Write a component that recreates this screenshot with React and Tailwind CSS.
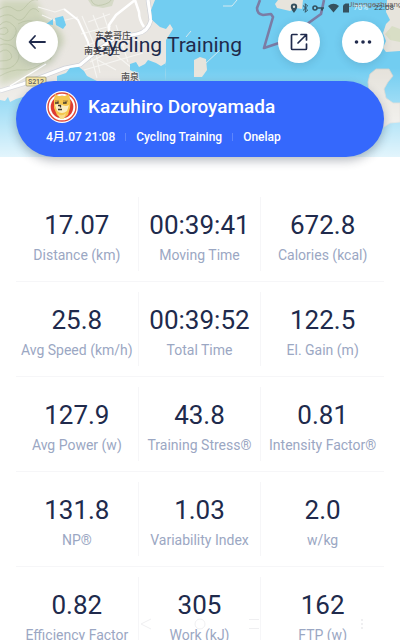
const stats = [
  [
    { value: '17.07', label: 'Distance (km)' },
    { value: '00:39:41', label: 'Moving Time' },
    { value: '672.8', label: 'Calories (kcal)' },
  ],
  [
    { value: '25.8', label: 'Avg Speed (km/h)' },
    { value: '00:39:52', label: 'Total Time' },
    { value: '122.5', label: 'El. Gain (m)' },
  ],
  [
    { value: '127.9', label: 'Avg Power (w)' },
    { value: '43.8', label: 'Training Stress®' },
    { value: '0.81', label: 'Intensity Factor®' },
  ],
  [
    { value: '131.8', label: 'NP®' },
    { value: '1.03', label: 'Variability Index' },
    { value: '2.0', label: 'w/kg' },
  ],
  [
    { value: '0.82', label: 'Efficiency Factor' },
    { value: '305', label: 'Work (kJ)' },
    { value: '162', label: 'FTP (w)' },
  ],
];

function MapBackdrop() {
  return (
    <svg
      viewBox="0 0 400 157"
      preserveAspectRatio="xMidYMin slice"
      className="absolute inset-0 h-full w-full"
      aria-hidden="true"
    >
      <defs>
        <linearGradient id="fade" x1="0" y1="0" x2="0" y2="1">
          <stop offset="0" stopColor="#fff" stopOpacity="0" />
          <stop offset="1" stopColor="#fff" stopOpacity="0.8" />
        </linearGradient>
        <filter id="soft" x="-20%" y="-20%" width="140%" height="140%">
          <feGaussianBlur stdDeviation="3" />
        </filter>
        <clipPath id="land">
          <path d="M0 0H155L151 10L152 20L160 27L166 29L170 24L173 29L166 40V61L165 66L166 81H70L40 92L16 99L10 102L8 97L5 101L0 100Z" />
        </clipPath>
      </defs>
      <rect width="400" height="157" fill="#72cdf1" />

      <g clipPath="url(#land)">
        <rect width="180" height="110" fill="#e9e6e1" />
        <path
          d="M0 0H36L41 10L46 18L52 24L62 33L64 42L57 52L52 62L40 67L30 72L22 78L10 82L0 86Z"
          fill="#cfd5bb"
          filter="url(#soft)"
        />
        <path d="M88 0H114L112 6L103 8L92 6Z" fill="#d6dac8" />
        <g fill="none" stroke="#b3be9c" strokeWidth="0.8" opacity="0.7">
          <path d="M0 9Q8 4 14 9T26 6T38 0" />
          <path d="M0 17Q9 12 15 18T27 14T39 12" />
          <path d="M0 25Q6 18 13 25Q19 30 14 37T0 38" />
          <path d="M0 29Q8 25 8 32Q5 36 0 34" />
          <path d="M0 45Q8 42 15 48T17 62T0 69" />
          <path d="M0 52Q7 47 11 54T0 61" />
          <path d="M18 24Q28 18 38 23T53 31" />
          <path d="M20 30Q27 25 33 29" />
          <path d="M0 76Q12 69 22 70T44 62" />
          <path d="M54 32Q60 38 56 47T50 60" />
          <path d="M91 0Q94 7 102 5T111 0" />
        </g>
        <g fill="none" stroke="#f6f5f2" strokeWidth="1.1">
          <path d="M38 7L55 12L64 9M42 15L58 22L78 17M88 22L110 14M81 34L111 26M85 46L110 37M90 62L132 40M84 70L143 53" />
          <path d="M82 16L94 44L100 73M93 15L106 48M103 13L117 55M116 25L128 62M98 60L116 70M91 56L97 78M126 36L144 44M111 51L132 68" />
        </g>
        <path
          d="M0 91L23 84L65 68L80 65L99 49L115 38L137 34Q148 32 151 20L148 0"
          fill="none"
          stroke="#cfd1d8"
          strokeWidth="4.6"
          strokeLinejoin="round"
        />
        <g fill="none" stroke="#fff" strokeWidth="3.2" strokeLinejoin="round">
          <path d="M0 91L23 84L65 68L80 65L99 49L115 38L137 34Q148 32 151 20L148 0" />
          <path d="M109 31V25L116 15L135 0L139 12Q139 20 144 27" strokeWidth="2.5" />
          <path d="M64 9L78 20L88 42L91 56" strokeWidth="2" />
          <path d="M10 86L38 69L46 64" strokeWidth="1.4" />
        </g>
        <g fill="#72cdf1">
          <path d="M46 24L53 19V25Z" />
          <path d="M55 18L63 16L66 25L63 29L56 25Z" />
          <path d="M57 81L57 76L66 73L70 68L79 67L84 71L87 76L97 81Z" />
          <path d="M130 64L136 62L139 67L145 64L148 60L156 63L161 66L166 63V81H140L136 73L130 70Z" />
        </g>
      </g>

      <path d="M223 6L232 6L237 0M186 37L191 31M205 64L220 50" fill="none" stroke="#d3e9f0" strokeWidth="1" />
      <path d="M278 0L275 4L277 8L290 11L296 8L302 9L303 0Z" fill="#e7e4dc" />
      <path d="M200 57L206 59L207 70L202 77H194V60Z" fill="#e7e4dc" />
      <path d="M387 0H400V51L386 52L383 48L386 41L383 33L386 24L390 20L386 12Z" fill="#e7e4dc" />
      <path d="M385 34L392 26L400 29V42L390 40Z" fill="#d8dec5" />
      <path
        d="M370 74L376 69L389 69L393 76L388 82L384 89L386 98L393 103L400 103V122L390 123L384 127L372 123L373 104L369 91L368 82Z"
        fill="#e5e2db"
        stroke="#d5d2ca"
        strokeWidth="0.8"
      />
      <path
        d="M260 0L257 8Q257 14 263 15L271 14L273 17L264 48L282 42L321 14L324 0"
        fill="none"
        stroke="#7b7ca5"
        strokeWidth="2.6"
        strokeLinejoin="round"
      />

      <rect x="26" y="77" width="20" height="9" rx="1" fill="#f4e39a" stroke="#8d8a66" strokeWidth="0.8" />
      <g fontFamily="Roboto, 'Noto Sans CJK SC', sans-serif" fill="#4a494b">
        <text x="36" y="84" fontSize="7" fontWeight="500" textAnchor="middle">S212</text>
        <g fontSize="9" fontWeight="500" stroke="#f4f2ee" strokeWidth="1" paintOrder="stroke">
          <text x="95" y="39">东姜哥庄</text>
          <text x="84" y="54">南姜哥庄</text>
          <text x="121" y="80">南泉</text>
        </g>
        <text x="348" y="7" fontSize="8" fill="#756965">Jianngezhuang</text>
      </g>
      <rect y="68" width="400" height="89" fill="url(#fade)" />
    </svg>
  );
}

function StatusBar() {
  return (
    <div className="absolute inset-x-0 top-0 flex h-4 items-center justify-end pr-1.5 text-[8px] leading-4 text-[#35515f]">
      <svg viewBox="0 0 64 12" fill="currentColor" className="mr-0.5 h-3 w-16" aria-hidden="true">
        <path
          fillRule="evenodd"
          d="M7 1.5A3.2 3.2 0 0 1 10.2 4.7C10.2 7 7 10.8 7 10.8S3.8 7 3.8 4.7A3.2 3.2 0 0 1 7 1.5ZM7 3.5A1.2 1.2 0 1 0 7 5.9A1.2 1.2 0 0 0 7 3.5Z"
        />
        <path d="M16 3.5L20.6 8L18.3 10.3V1.7L20.6 4L16 8.5" fill="none" stroke="currentColor" />
        <circle cx="28" cy="6" r="2" fill="none" stroke="currentColor" strokeWidth="1.6" />
        <path d="M30 5.2H37V6.8H36V8.6H34V6.8H30Z" />
        <path d="M41 4Q46.5 -0.5 52 4L46.5 10.5Z" />
        <path d="M57 2.5L58.5 1.5H62V10.5H56V3.5Z" />
      </svg>
      <span className="mr-1.5 text-white/80">70%</span>
      <span className="text-[#3c4c57]">22:08</span>
    </div>
  );
}

function BackIcon() {
  return (
    <svg viewBox="0 0 24 24" fill="none" stroke="currentColor" strokeWidth="1.8" className="h-6 w-6">
      <path d="M20 12H5M10 6L4.5 12L10 18" strokeLinecap="round" strokeLinejoin="round" />
    </svg>
  );
}

function ShareIcon() {
  return (
    <svg viewBox="0 0 24 24" fill="none" stroke="currentColor" strokeWidth="1.7" className="h-6 w-6">
      <path
        d="M10 4.5H5.5A1 1 0 0 0 4.5 5.5V18.5A1 1 0 0 0 5.5 19.5H18.5A1 1 0 0 0 19.5 18.5V14"
        strokeLinecap="round"
      />
      <path d="M14 4.5H19.5V10M19 5L11 13" strokeLinecap="round" strokeLinejoin="round" />
    </svg>
  );
}

function MoreIcon() {
  return (
    <svg viewBox="0 0 24 24" fill="currentColor" className="h-6 w-6">
      <circle cx="5.5" cy="12" r="1.8" />
      <circle cx="12" cy="12" r="1.8" />
      <circle cx="18.5" cy="12" r="1.8" />
    </svg>
  );
}

function RoundButton({ label, children }) {
  return (
    <button
      type="button"
      aria-label={label}
      className="flex h-[42px] w-[42px] shrink-0 items-center justify-center rounded-full bg-white shadow-[0_2px_8px_rgba(40,60,90,0.16)]"
    >
      {children}
    </button>
  );
}

function Avatar() {
  return (
    <svg viewBox="0 0 32 32" className="h-8 w-8 shrink-0" aria-hidden="true">
      <circle cx="16" cy="16" r="16" fill="#fff" />
      <circle cx="16" cy="16" r="14" fill="#fff" stroke="#df4a3c" strokeWidth="1.4" />
      <circle cx="16" cy="16" r="11.3" fill="#de3c31" />
      <path d="M9 3L12.5 5H19L23 3L24.5 11L24 17L22 24Q16 30 11 24L8 17L8 9Z" fill="#f5c64f" />
      <path d="M9 14Q12 12 16 14T23 14L21 20Q16 24 11 20Z" fill="#fbedc3" />
      <path d="M12 23Q16 26 20 22L18 28H14Z" fill="#f7dd8a" />
      <path d="M9 10H13M17 10H22" stroke="#a78340" strokeWidth="1" />
      <path d="M9 12H12V10.5M17 12H20V10.5M12 14.5H14.5V16.5M12 18.5H16" fill="none" stroke="#40382d" strokeWidth="1.3" />
    </svg>
  );
}

function ActivityCard() {
  return (
    <section className="relative mx-4 mt-[18px] h-[76px] rounded-full bg-[#3568fc] px-[30px] pt-2.5 text-white shadow-[0_4px_10px_rgba(30,40,60,0.3)]">
      <div className="flex items-center gap-2.5">
        <Avatar />
        <h2 className="truncate text-[19px] leading-8 font-medium">Kazuhiro Doroyamada</h2>
      </div>
      <div className="mt-1 flex items-center text-xs leading-5 font-medium whitespace-nowrap">
        <span>4月.07 21:08</span>
        <span className="mx-2.5 h-2 w-px bg-white/20" />
        <span>Cycling Training</span>
        <span className="mx-2.5 h-2 w-px bg-white/20" />
        <span>Onelap</span>
      </div>
    </section>
  );
}

function StatRow({ items }) {
  return (
    <div className="grid grid-cols-3 divide-x divide-[#f6f6f8] border-b border-[#f6f6f8] py-2.5">
      {items.map((item) => (
        <div key={item.label} className="flex h-[74px] flex-col items-center pt-3 whitespace-nowrap">
          <dt className="order-2 mt-1 text-sm leading-5 text-[#9ba7c3]">{item.label}</dt>
          <dd className="order-1 text-[26px] leading-8 text-[#202a4c]">{item.value}</dd>
        </div>
      ))}
    </div>
  );
}

function SystemNav() {
  return (
    <div
      className="pointer-events-none fixed inset-x-0 bottom-0 grid h-8 grid-cols-[1fr_54px_54px_54px_1fr] items-center justify-items-center text-[#efeff1]"
      aria-hidden="true"
    >
      <span />
      <svg viewBox="0 0 12 12" fill="none" stroke="currentColor" className="h-3 w-3">
        <path d="M11 1L1 6L11 11" />
      </svg>
      <svg viewBox="0 0 12 12" fill="none" stroke="currentColor" className="h-3 w-3">
        <circle cx="6" cy="6" r="5" />
      </svg>
      <svg viewBox="0 0 12 12" fill="none" stroke="currentColor" className="h-3 w-3">
        <path d="M1 1.5H11M1 10.5H11" />
      </svg>
      <svg viewBox="0 0 12 12" fill="currentColor" className="mr-8 h-3 w-3 justify-self-end">
        <path d="M5 1H7V3H5ZM5 5H7V7H5ZM5 9H7V11H5Z" />
      </svg>
    </div>
  );
}

export default function App() {
  return (
    <main className="min-h-screen bg-white font-['Roboto','Noto_Sans_CJK_SC',sans-serif] text-[#202a4c]">
      <header className="relative">
        <MapBackdrop />
        <StatusBar />
        <div className="relative flex items-center px-4 pt-[21px]">
          <RoundButton label="Back">
            <BackIcon />
          </RoundButton>
          <h1 className="mt-1.5 flex-1 text-center text-[21px] leading-8 whitespace-nowrap">Cycling Training</h1>
          <div className="flex gap-[22px]">
            <RoundButton label="Share">
              <ShareIcon />
            </RoundButton>
            <RoundButton label="More">
              <MoreIcon />
            </RoundButton>
          </div>
        </div>
        <ActivityCard />
      </header>

      <dl className="px-4 pt-[30px]">
        {stats.map((row) => (
          <StatRow key={row[0].label} items={row} />
        ))}
      </dl>
      <SystemNav />
    </main>
  );
}
